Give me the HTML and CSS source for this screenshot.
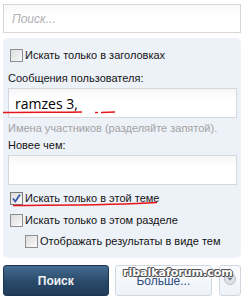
FILE: index.html
```html
<!DOCTYPE html>
<html lang="ru">
<head>
    <meta charset="UTF-8">
    <title>Поиск</title>
    <link rel="stylesheet" href="styles.css">
</head>
<body>
    <div class="page">
        <input type="text" class="search" placeholder="Поиск...">

        <div class="panel">
            <label class="check-row">
                <span class="cb"></span>
                Искать только в заголовках
            </label>

            <div class="field-label">Сообщения пользователя:</div>
            <input type="text" class="field big" value="ramzes 3,">
            <div class="hint">Имена участников (разделяйте запятой).</div>

            <div class="field-label second">Новее чем:</div>
            <input type="text" class="field">

            <label class="check-row first-check">
                <span class="cb checked">
                    <svg width="11" height="11" viewBox="0 0 11 11"><path d="M2 5.5 L4.3 8.5 L9 1.5" fill="none" stroke="#3a58a8" stroke-width="1.8"/></svg>
                </span>
                Искать только в этой теме
            </label>
            <label class="check-row">
                <span class="cb"></span>
                Искать только в этом разделе
            </label>
            <label class="check-row indent">
                <span class="cb"></span>
                Отображать результаты в виде тем
            </label>
        </div>

        <div class="buttons">
            <button class="btn primary">Поиск</button>
            <button class="btn more">Больше...</button>
            <button class="btn drop">
                <svg width="12" height="12" viewBox="0 0 12 12"><circle cx="6" cy="6" r="5.5" fill="#dfe2e6" stroke="#b9bec5"/><path d="M3.5 4.8 L6 7.5 L8.5 4.8 Z" fill="#6b7480"/></svg>
            </button>
        </div>

        <!-- hand-drawn annotations -->
        <svg class="marks" width="245" height="300" viewBox="0 0 245 300">
            <path d="M3 112.5 C30 112 60 112.5 82 112" fill="none" stroke="#e8141a" stroke-width="1.4"/>
            <path d="M95 112.5 L98 112.5" fill="none" stroke="#e8141a" stroke-width="1.4"/>
            <path d="M101 112.5 L115 112" fill="none" stroke="#e8141a" stroke-width="1.4"/>
            <path d="M13 205.5 C50 205 110 205.5 157 202.5" fill="none" stroke="#e8141a" stroke-width="1.4"/>
        </svg>
        <div class="watermark">ribalkaforum.com</div>
    </div>
</body>
</html>
```

FILE: styles.css
```css
body {
    margin: 0;
    background: #fff;
    font-family: 'Liberation Sans', Arial, sans-serif;
    font-size: 11px;
    color: #141414;
}
.page {
    position: relative;
    width: 245px;
    height: 300px;
    padding-top: 4px;
    box-sizing: border-box;
}
.search {
    display: block;
    box-sizing: border-box;
    margin-left: 3px;
    width: 238px;
    height: 29px;
    border: 1px solid #d6d6d6;
    background: linear-gradient(#f8f8f8, #fff 40%);
    padding: 0 0 0 8px;
    font-family: inherit;
    font-size: 12px;
    font-style: italic;
}
.search::placeholder {
    color: #b0b0b0;
}
.panel {
    margin: 5px 4px 0 3px;
    height: 220px;
    box-sizing: border-box;
    background: #edf1f8;
    border-radius: 5px;
    padding: 10px 4px 0 5px;
}
.check-row {
    display: flex;
    align-items: center;
    gap: 2px;
    height: 14px;
    padding-left: 2px;
}
.cb {
    display: inline-block;
    width: 11px;
    height: 11px;
    border: 1px solid #8f8f8f;
    background: linear-gradient(135deg, #dcdcdc, #fafafa);
    position: relative;
}
.cb svg {
    position: absolute;
    left: 0;
    top: 0;
}
.cb.checked {
    border-color: #7b7b7b;
}
.field-label {
    margin-top: 9px;
    height: 15px;
    line-height: 15px;
}
.field-label.second {
    margin-top: 3px;
}
.field {
    display: block;
    box-sizing: border-box;
    width: 229px;
    height: 30px;
    margin-top: 2px;
    border: 1px solid #d4d8de;
    background: linear-gradient(#f6f6f6, #fff 35%);
    padding: 0 0 0 6px;
    font-family: 'Open Sans', sans-serif;
    color: #000;
}
.field.big {
    font-size: 14px;
}
.hint {
    margin-top: 3px;
    height: 14px;
    line-height: 14px;
    color: #a3a3a3;
    font-size: 11px;
}
.first-check {
    margin-top: 6px;
}
.check-row + .check-row {
    margin-top: 8px;
}
.check-row.indent {
    padding-left: 17px;
    margin-top: 7px;
}
.buttons {
    display: flex;
    gap: 6px;
    margin: 7px 4px 0 3px;
    height: 31px;
}
.btn {
    height: 31px;
    border-radius: 3px;
    font-family: inherit;
    font-size: 12px;
}
.primary {
    width: 106px;
    background: linear-gradient(#456d92, #2b4c6c 50%, #1f3b57);
    border: 1px solid #1e3550;
    color: #f0f2f5;
    font-weight: bold;
}
.more {
    width: 98px;
    background: linear-gradient(#fbfcfe, #eef2f8);
    border: 1px solid #cfd6e0;
    color: #2b4c7d;
}
.drop {
    width: 22px;
    margin-left: 1px;
    padding: 0;
    background: linear-gradient(#fbfcfe, #eef2f8);
    border: 1px solid #cfd6e0;
}
.marks {
    position: absolute;
    left: 0;
    top: 0;
    pointer-events: none;
}
.watermark {
    position: absolute;
    left: 123px;
    top: 266px;
    font-family: 'DejaVu Sans', sans-serif;
    font-weight: bold;
    font-size: 11px;
    color: #fff;
    text-shadow: -1px 0 #555, 1px 0 #555, 0 -1px #555, 0 1px #555, 1px 1px #555, -1px -1px #555;
}
```
